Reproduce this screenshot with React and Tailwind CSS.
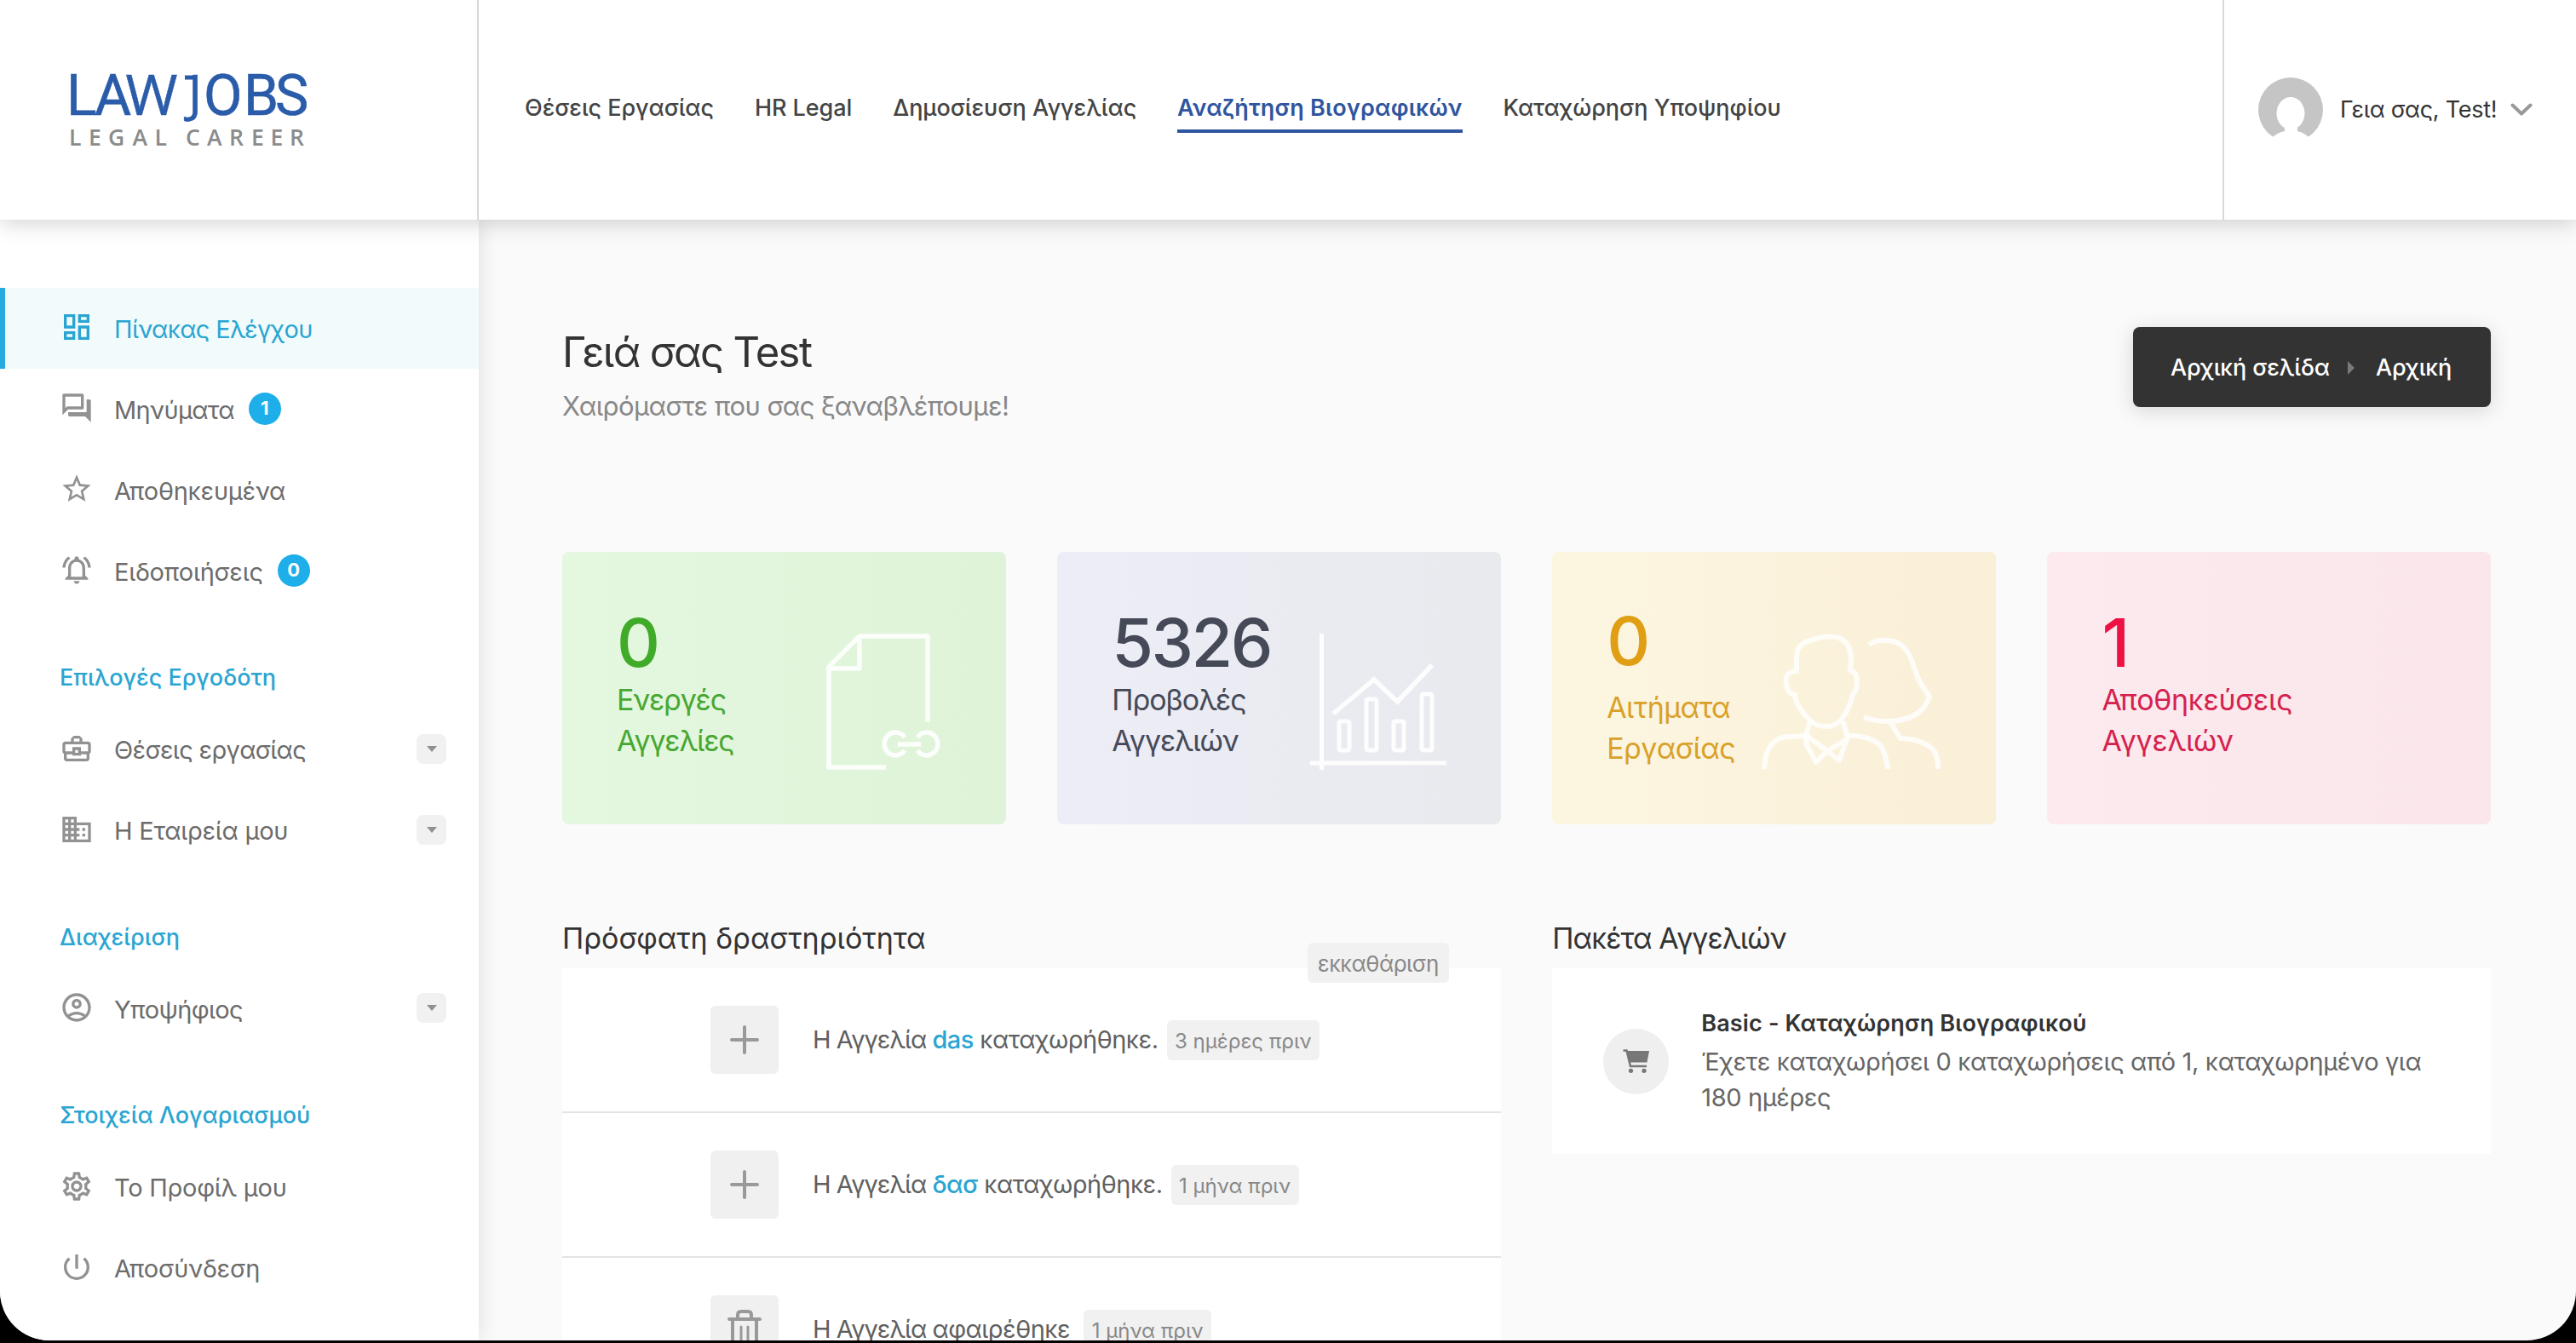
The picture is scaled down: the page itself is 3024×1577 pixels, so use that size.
import {
  MdOutlineDashboard,
  MdOutlineQuestionAnswer,
  MdStarBorder,
  MdOutlineNotificationsActive,
  MdOutlineBusinessCenter,
  MdOutlineBusiness,
  MdOutlineAccountCircle,
  MdOutlineSettings,
  MdPowerSettingsNew,
} from "react-icons/md"

const navLinks = [
  { label: "Θέσεις Εργασίας" },
  { label: "HR Legal" },
  { label: "Δημοσίευση Αγγελίας" },
  { label: "Αναζήτηση Βιογραφικών", active: true },
  { label: "Καταχώρηση Υποψηφίου" },
]

const menuGroups = [
  {
    items: [
      { label: "Πίνακας Ελέγχου", icon: MdOutlineDashboard, active: true, tight: true },
      { label: "Μηνύματα", icon: MdOutlineQuestionAnswer, badge: "1", tight: true },
      { label: "Αποθηκευμένα", icon: MdStarBorder },
      { label: "Ειδοποιήσεις", icon: MdOutlineNotificationsActive, badge: "0" },
    ],
  },
  {
    title: "Επιλογές Εργοδότη",
    items: [
      { label: "Θέσεις εργασίας", icon: MdOutlineBusinessCenter, toggle: true, tight: true },
      { label: "Η Εταιρεία μου", icon: MdOutlineBusiness, toggle: true },
    ],
  },
  {
    title: "Διαχείριση",
    items: [{ label: "Υποψήφιος", icon: MdOutlineAccountCircle, toggle: true, tight: true }],
  },
  {
    title: "Στοιχεία Λογαριασμού",
    items: [
      { label: "Το Προφίλ μου", icon: MdOutlineSettings },
      { label: "Αποσύνδεση", icon: MdPowerSettingsNew },
    ],
  },
]

const Logo = () => (
  <svg width="300" height="150" viewBox="70 54 300 150" className="ml-[70px] overflow-visible">
    <g fill="#2a5caa" fontFamily="Roboto, sans-serif" fontSize="66" stroke="#2a5caa" strokeWidth="0.6">
      <text y="134.5" x="78 111">
        LA
      </text>
      <text y="134.5" x="147.5" fontFamily="'Open Sans', sans-serif">
        W
      </text>
      <text y="131" x="221" fontSize="60" fontFamily="'Open Sans', sans-serif">
        J
      </text>
      <rect x="217" y="88.5" width="12" height="5" stroke="none" />
      <text y="134.5" x="239 286 323">
        OBS
      </text>
    </g>
    <text
      y="170.5"
      x="81 104 127 155.5 181.5 200 218 243 269 295 317.5 340"
      fill="#8b8b8b"
      fontFamily="'Open Sans', sans-serif"
      fontSize="26.5"
      fontWeight="600"
    >
      LEGAL CAREER
    </text>
  </svg>
)

const Avatar = () => (
  <svg width="76" height="76" viewBox="0 0 76 76">
    <circle cx="38" cy="38" r="38" fill="#c5c5c5" />
    <ellipse cx="38" cy="42" rx="16.5" ry="19" fill="#fff" />
    <path d="M31 55 V63 Q20 65 12 75 V78 H64 V75 Q56 65 46 63 V55 Z" fill="#fff" />
  </svg>
)

const Header = () => (
  <header className="relative z-20 flex h-[258px] bg-white shadow-[0_4px_24px_rgba(0,0,0,0.18)]">
    <div className="flex w-[562px] items-center border-r-2 border-[#d8d8d8]">
      <Logo />
    </div>
    <nav className="mt-[5px] flex flex-1 items-center gap-12 pl-[54px] text-[27px] leading-10 font-medium tracking-[-0.06px] text-[#444]">
      {navLinks.map((link) => (
        <a
          key={link.label}
          className={
            link.active
              ? "border-b-4 border-[#2f559f] pb-[5px] font-semibold tracking-[0.2px] text-[#2f559f]"
              : "border-b-4 border-transparent pb-[5px]"
          }
        >
          {link.label}
        </a>
      ))}
    </nav>
    <div className="flex w-[415px] items-center border-l-2 border-[#d8d8d8] pl-10">
      <Avatar />
      <span className="ml-5 pt-px text-[27px] tracking-[-0.25px] text-[#333]">Γεια σας, Test!</span>
      <svg width="26" height="16" viewBox="0 0 26 16" className="ml-4">
        <path
          d="M2.5 2.5 L13 12.5 L23.5 2.5"
          fill="none"
          stroke="#999"
          strokeWidth="4"
          strokeLinecap="round"
          strokeLinejoin="round"
        />
      </svg>
    </div>
  </header>
)

const MenuItem = ({ item }) => {
  const Icon = item.icon
  return (
    <li
      className={
        item.active
          ? "flex h-[95px] items-center border-l-6 border-[#26abe0] bg-[#f2fbfc] pr-[38px] pl-16 text-[#2aa5d2]"
          : "flex h-[95px] items-center pr-[38px] pl-[70px] text-[#6c6c6c]"
      }
    >
      <Icon className={item.active ? "mb-[3px] size-10" : "mb-[3px] size-10 text-[#929292]"} />
      <span
        className={
          item.tight
            ? "ml-6 pt-0.5 text-[29px] tracking-[-0.65px]"
            : "ml-6 pt-0.5 text-[29px] tracking-[-0.25px]"
        }
      >
        {item.label}
      </span>
      {item.badge && (
        <span className="mb-0.5 ml-[17px] flex size-[38px] items-center justify-center rounded-full bg-[#1eaee9] text-[22px] font-bold text-white">
          {item.badge}
        </span>
      )}
      {item.toggle && (
        <span className="mb-0.5 ml-auto flex size-[35px] items-center justify-center rounded-lg bg-[#f1f1f1]">
          <svg width="12" height="7" viewBox="0 0 12 7" fill="#909090">
            <path d="M0 0 H12 L6 7 Z" />
          </svg>
        </span>
      )}
    </li>
  )
}

const Sidebar = () => (
  <aside className="relative z-10 w-[562px] bg-white pt-20 shadow-[0_0_24px_rgba(0,0,0,0.12)]">
    {menuGroups.map((group, i) => (
      <div key={i}>
        {group.title && (
          <h3 className="flex h-[114.5px] items-center pt-[42px] pl-[70px] text-[27px] font-medium text-[#2aa5d2]">
            {group.title}
          </h3>
        )}
        <ul>
          {group.items.map((item) => (
            <MenuItem key={item.label} item={item} />
          ))}
        </ul>
      </div>
    ))}
  </aside>
)

const DocumentArt = () => (
  <svg width="148" height="160" viewBox="0 0 148 160" fill="none" stroke="#fff" strokeWidth="5.5" strokeOpacity="0.9" strokeLinejoin="round">
    <path d="M70 157 H3 V39 L39 3 H119 V104 M39 3 V41 H3" />
    <path d="M92 122 A13 13.5 0 1 0 92 137 M107 122 A13 13.5 0 1 1 107 137 M84 130 H111" />
  </svg>
)

const ChartArt = () => (
  <svg width="161" height="160" viewBox="0 0 161 160" fill="none" stroke="#fff" strokeWidth="5" strokeOpacity="0.9">
    <path d="M13.5 0 V160 M0 152 H160" />
    <path d="M27 94 L75 54 L102.5 80 L143 37" strokeWidth="5.5" />
    <rect x="34" y="103" width="12" height="34" rx="2" />
    <rect x="66" y="77" width="12" height="60" rx="2" />
    <rect x="98" y="103" width="12" height="34" rx="2" />
    <rect x="131" y="71" width="12" height="66" rx="2" />
  </svg>
)

const PeopleArt = () => (
  <svg width="212" height="163" viewBox="0 -3 212 163" fill="none" stroke="#fff" strokeWidth="6" strokeOpacity="0.8" strokeLinejoin="round">
    <path d="M41 43 V28 Q41 10 58 7 Q70 2 82 2.5 Q103 3 105 27 L104 42 Q112 44 112 56 Q112 67 107 70 Q103 88 94 99 Q87 108 77 108 Q64 108 57 101 Q40 84 39 71 Q31 69 30 62 Q24 44 41 43 Z" />
    <path d="M3 158 L5 142 Q12 120 33 120 L52 119 M101 119 Q123 118 137 128 Q145 134 148 158" />
    <path d="M57 102 L52 118 L53 130 L64 150 L77 137 L52 118 M95 102 L101 120 L91 148 L77 137 L100 123" />
    <path d="M126 12 Q135 6 144 7 Q167 6 176 30 Q183 52 189 61 L197 73 Q188 102 146 102 Q130 101 120 97 M151 103 L163 122 Q183 122 198 132 Q207 138 207 158" />
  </svg>
)

const stats = [
  {
    value: "0",
    lines: ["Ενεργές", "Αγγελίες"],
    card: "from-[#e4f8e0] to-[#def3d7] pt-[67px]",
    valueClass: "text-[#40ab28]",
    labelClass: "mt-1 tracking-[-1.2px] text-[#48a733]",
    art: <DocumentArt />,
  },
  {
    value: "5326",
    lines: ["Προβολές", "Αγγελιών"],
    card: "from-[#ecedf6] to-[#e9eaee] pt-[67px]",
    valueClass: "text-[#464a58]",
    labelClass: "mt-1 tracking-[-1px] text-[#464a58]",
    art: <ChartArt />,
  },
  {
    value: "0",
    lines: ["Αιτήματα", "Εργασίας"],
    card: "from-[#fcf6e1] to-[#faefd7] pt-[65px]",
    valueClass: "text-[#e09e14]",
    labelClass: "mt-[15px] tracking-[-0.6px] text-[#d9a129]",
    art: <PeopleArt />,
  },
  {
    value: "1",
    lines: ["Αποθηκεύσεις", "Αγγελιών"],
    card: "from-[#fceaee] to-[#fae6eb] pt-[67px]",
    valueClass: "text-[#ee1144]",
    labelClass: "mt-1 tracking-[-0.3px] text-[#d5214f]",
  },
]

const StatCard = ({ stat }) => (
  <div className={`flex h-80 justify-between rounded-lg bg-linear-to-r pr-[63px] pl-16 ${stat.card}`}>
    <div>
      <p className={`text-[79px] leading-none font-medium tracking-[-2.5px] ${stat.valueClass}`}>{stat.value}</p>
      <p className={`text-[34px] leading-12 ${stat.labelClass}`}>
        {stat.lines[0]}
        <br />
        {stat.lines[1]}
      </p>
    </div>
    <div className="mt-[29px]">{stat.art}</div>
  </div>
)

const PlusIcon = () => (
  <svg width="34" height="34" viewBox="0 0 34 34" stroke="#999" strokeWidth="4" strokeLinecap="round">
    <path d="M17 2 V32 M2 17 H32" />
  </svg>
)

const TrashIcon = () => (
  <svg width="40" height="46" viewBox="0 0 40 46" fill="none" stroke="#999" strokeWidth="4" strokeLinecap="round" strokeLinejoin="round">
    <path d="M2 11 H38 M6 12 V44 H34 V12 M12 10 V6 Q12 2 16 2 H24 Q28 2 28 6 V10" />
    <path d="M16 20 V38 M24 20 V38" strokeWidth="3" />
  </svg>
)

const CartIcon = () => (
  <svg width="31" height="28" viewBox="0 0 31 28" fill="#777">
    <path d="M4 2 H31 L28.5 15.5 H7.5 Z" />
    <path d="M0.5 1.5 H4.5 L9 20 H28" fill="none" stroke="#777" strokeWidth="2.5" />
    <circle cx="9.5" cy="25.3" r="2.6" />
    <circle cx="25" cy="25.3" r="2.6" />
  </svg>
)

const activities = [
  { link: "das", text: "καταχωρήθηκε.", time: "3 ημέρες πριν" },
  { link: "δασ", text: "καταχωρήθηκε.", time: "1 μήνα πριν" },
  { text: "αφαιρέθηκε", time: "1 μήνα πριν", removed: true },
]

const ActivityRow = ({ activity }) => (
  <li className="flex h-[170px] items-center border-b-2 border-[#e4e4e4] pl-[174px]">
    <span className="flex size-[80px] items-center justify-center rounded-md bg-[#f0f0f0]">
      {activity.removed ? <TrashIcon /> : <PlusIcon />}
    </span>
    <span className="ml-10 text-[29px] tracking-[-0.5px] whitespace-pre text-[#606060]">
      <span className="tracking-[-1px]">Η Αγγελία </span>
      {activity.link && <a className="font-medium text-[#2aa5d2]">{activity.link} </a>}
      {activity.text}
    </span>
    <span
      className={
        activity.removed
          ? "ml-4 flex h-[47px] items-center rounded-md bg-[#f1f1f1] px-[9.5px] pt-1 text-2xl text-[#888]"
          : "ml-[10px] flex h-[47px] items-center rounded-md bg-[#f1f1f1] px-[9.5px] pt-1 text-2xl text-[#888]"
      }
    >
      {activity.time}
    </span>
  </li>
)

const App = () => {
  return (
    <div className="h-[1577px] bg-black font-['Inter','Noto_Sans',sans-serif]">
      <div className="flex h-[1574px] flex-col overflow-hidden rounded-b-[58px] bg-[#fafafa]">
        <Header />
        <div className="flex min-h-0 flex-1">
          <Sidebar />
          <main className="flex-1 pt-[126px] pr-[100px] pl-[98px]">
            <div className="flex h-[264px] items-start justify-between">
              <div>
                <h1 className="text-[49px] leading-[60px] tracking-[-1.6px] text-[#333]">Γειά σας Test</h1>
                <p className="mt-[11px] text-[31px] leading-[44px] tracking-[-0.6px] text-[#888]">
                  Χαιρόμαστε που σας ξαναβλέπουμε!
                </p>
              </div>
              <div className="flex h-[94px] w-[420px] items-center rounded-lg bg-[#333] pt-0.5 pl-11 text-[27px] font-medium tracking-[-0.1px] text-white shadow-[0_4px_24px_rgba(0,0,0,0.15)]">
                <span>Αρχική σελίδα</span>
                <svg width="8" height="16" viewBox="0 0 8 16" className="mr-[25px] ml-[21px]" fill="#7a7a7a">
                  <path d="M0 0 L8 8 L0 16 Z" />
                </svg>
                <span>Αρχική</span>
              </div>
            </div>

            <div className="grid grid-cols-4 gap-[60.5px]">
              {stats.map((stat, i) => (
                <StatCard key={i} stat={stat} />
              ))}
            </div>

            <div className="mt-[108px] grid grid-cols-2 gap-[60.5px]">
              <section className="relative">
                <h2 className="h-[61px] text-[34px] leading-[52px] text-[#333]">Πρόσφατη δραστηριότητα</h2>
                <ul className="bg-white">
                  {activities.map((activity, i) => (
                    <ActivityRow key={i} activity={activity} />
                  ))}
                </ul>
                <button className="absolute top-[31px] right-[61px] flex h-[47px] w-[166px] items-center justify-center rounded-md bg-[#f1f1f1] pt-0.5 text-[26px] tracking-[-0.5px] text-[#888]">
                  εκκαθάριση
                </button>
              </section>
              <section>
                <h2 className="h-[61px] text-[34px] leading-[52px] tracking-[-0.9px] text-[#333]">Πακέτα Αγγελιών</h2>
                <div className="flex h-[218px] items-center bg-white pr-14 pl-[60px]">
                  <span className="flex size-[77px] items-center justify-center rounded-full bg-[#efefef]">
                    <CartIcon />
                  </span>
                  <div className="ml-[38px] pb-[3px]">
                    <p className="mb-0.5 text-[27px] leading-[44px] font-semibold tracking-[0.15px] text-[#333]">
                      Basic - Καταχώρηση Βιογραφικού
                    </p>
                    <p className="text-[29px] leading-[42px] tracking-[-0.38px] text-[#666]">
                      Έχετε καταχωρήσει 0 καταχωρήσεις από 1, καταχωρημένο για
                      <br />
                      180 ημέρες
                    </p>
                  </div>
                </div>
              </section>
            </div>
          </main>
        </div>
      </div>
    </div>
  )
}

export default App
